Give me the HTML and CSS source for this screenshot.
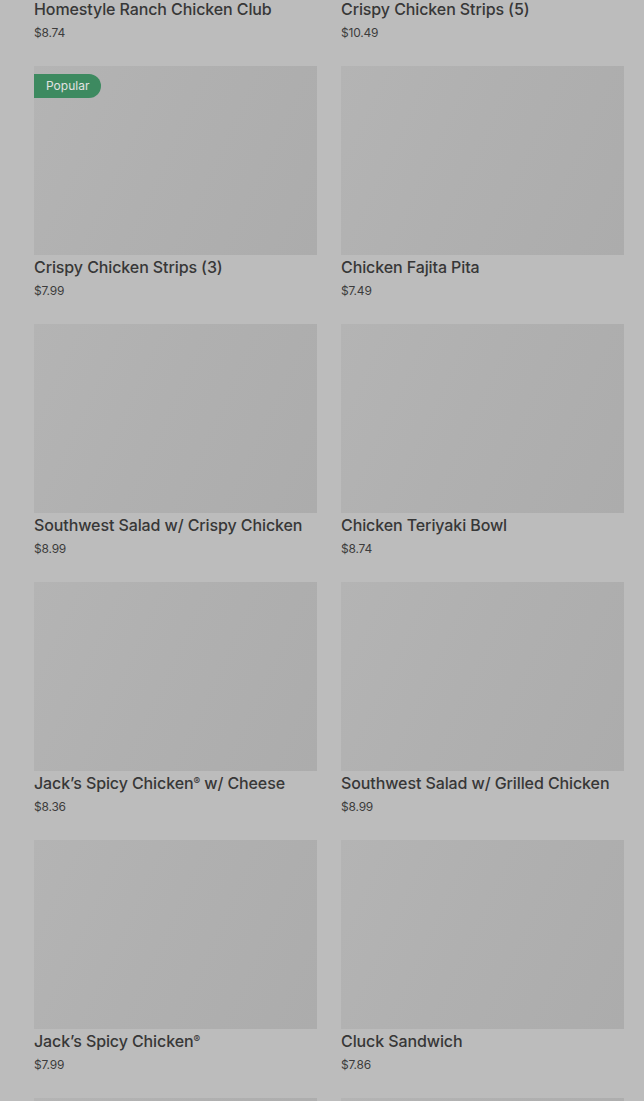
FILE: index.html
```html
<!DOCTYPE html>
<html lang="en">
<head>
<meta charset="utf-8">
<title>Menu</title>
<link rel="stylesheet" href="styles.css">
</head>
<body>
<main class="viewport">
  <section class="grid">
    <article class="card">
      <div class="thumb"></div>
      <h3 class="name">Homestyle Ranch Chicken Club</h3>
      <p class="price">$8.74</p>
    </article>
    <article class="card">
      <div class="thumb"></div>
      <h3 class="name">Crispy Chicken Strips (5)</h3>
      <p class="price">$10.49</p>
    </article>
    <article class="card">
      <div class="thumb"><span class="badge">Popular</span></div>
      <h3 class="name">Crispy Chicken Strips (3)</h3>
      <p class="price">$7.99</p>
    </article>
    <article class="card">
      <div class="thumb"></div>
      <h3 class="name">Chicken Fajita Pita</h3>
      <p class="price">$7.49</p>
    </article>
    <article class="card">
      <div class="thumb"></div>
      <h3 class="name">Southwest Salad w/ Crispy Chicken</h3>
      <p class="price">$8.99</p>
    </article>
    <article class="card">
      <div class="thumb"></div>
      <h3 class="name">Chicken Teriyaki Bowl</h3>
      <p class="price">$8.74</p>
    </article>
    <article class="card">
      <div class="thumb"></div>
      <h3 class="name">Jack’s Spicy Chicken<span class="reg">®</span> w/ Cheese</h3>
      <p class="price">$8.36</p>
    </article>
    <article class="card">
      <div class="thumb"></div>
      <h3 class="name">Southwest Salad w/ Grilled Chicken</h3>
      <p class="price">$8.99</p>
    </article>
    <article class="card">
      <div class="thumb"></div>
      <h3 class="name">Jack’s Spicy Chicken<span class="reg">®</span></h3>
      <p class="price">$7.99</p>
    </article>
    <article class="card">
      <div class="thumb"></div>
      <h3 class="name">Cluck Sandwich</h3>
      <p class="price">$7.86</p>
    </article>
    <article class="card">
      <div class="thumb"></div>
      <h3 class="name">&nbsp;</h3>
      <p class="price">&nbsp;</p>
    </article>
    <article class="card">
      <div class="thumb"></div>
      <h3 class="name">&nbsp;</h3>
      <p class="price">&nbsp;</p>
    </article>
  </section>
</main>
</body>
</html>
```

FILE: styles.css
```css
html, body {
  margin: 0;
  padding: 0;
  background: #bcbcbc;
  height: 100%;
  overflow: hidden;
}

body {
  font-family: Inter, "Noto Sans", "Liberation Sans", sans-serif;
  color: #383838;
}

.viewport {
  height: 1101px;
  overflow: hidden;
}

.grid {
  display: grid;
  grid-template-columns: 283px 283px;
  column-gap: 24px;
  row-gap: 25.33px;
  padding: 0 20px 0 34px;
  margin-top: -192px;
}

.card {
  display: flex;
  flex-direction: column;
}

.thumb {
  position: relative;
  width: 283px;
  aspect-ratio: 3 / 2;
  background: linear-gradient(115deg, #b4b4b4 0%, #b0b0b0 45%, #acacac 100%);
}

.badge {
  position: absolute;
  top: 8px;
  left: 0;
  height: 24px;
  padding: 0 12px;
  display: flex;
  align-items: center;
  background: #3d8a60;
  color: #e2e2e2;
  font-size: 12px;
  border-radius: 0 12px 12px 0;
}

.name {
  margin: 2px 0 0;
  font-size: 16px;
  line-height: 20px;
  font-weight: 500;
  letter-spacing: -0.1px;
  color: #373737;
  white-space: nowrap;
}

.reg {
  font-size: 10px;
  vertical-align: 4px;
  line-height: 0;
}

.price {
  margin: 6px 0 0;
  font-size: 12px;
  line-height: 16px;
  font-weight: 400;
  letter-spacing: -0.2px;
  color: #3c3c3c;
}
```
